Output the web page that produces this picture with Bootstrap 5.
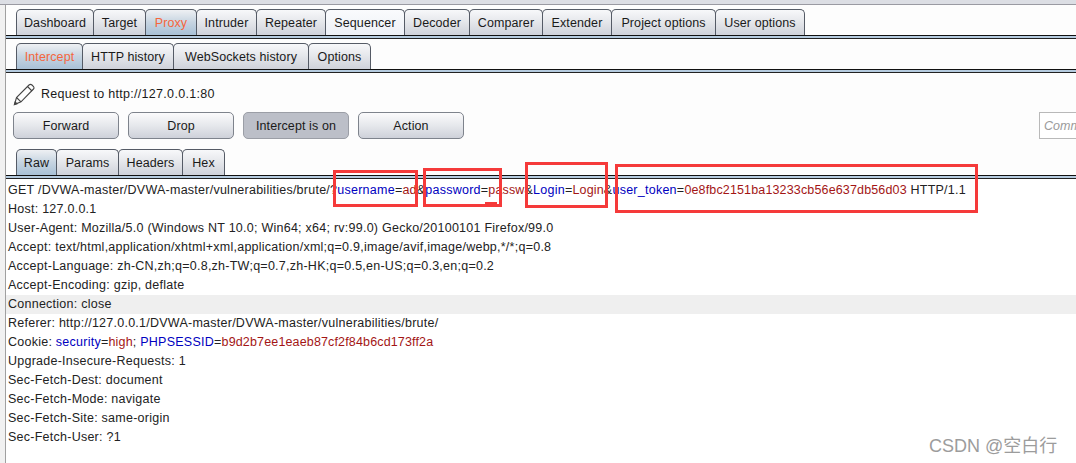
<!DOCTYPE html>
<html lang="en">
<head>
<meta charset="utf-8">
<title>Burp Suite</title>
<link href="https://cdn.jsdelivr.net/npm/bootstrap@5.3.0/dist/css/bootstrap.min.css" rel="stylesheet">
<style>
html,body{height:463px;overflow:hidden}
body{background:#f1f1f1;font-family:"Liberation Sans",Arial,sans-serif;font-size:12px;color:#1a1a1a;position:relative}
.topstrip{height:5px;background:#dcdee4;border-bottom:1px solid #9a9aa2}
.shell{height:458px;margin-left:5px;border-left:1px solid #a0a0a0;background:#fdfdfd;overflow:hidden}
.tabrow{padding-left:10px;border-bottom:1px solid #111;flex-wrap:nowrap}
.tabrow .tabx{height:26px;padding-top:1px;display:flex;align-items:center;justify-content:center;border:1px solid #555b66;border-bottom:0;border-radius:5px 5px 0 0;margin-right:-1px;background:linear-gradient(#f7f8fa,#e6e8ec 45%,#cfd2da);color:#1a1a1a;font-size:12.5px;letter-spacing:.1px;text-decoration:none}
.tabrow .tabx.on{background:linear-gradient(#eef0f3,#c6d4e1 50%,#a9c1d6)}
.tabrow .tabx.on.hot{color:#f5663c}
.tabrow .tabx.pale{background:linear-gradient(#fafbfd,#edf0f6)}
.understrip{height:3px;background:#b5cbdf;border-bottom:1px solid #222}
.sec1{height:4px}
.sec2{height:4px}
.reqline{height:39px;padding:3px 0 0 7px;gap:6px;font-size:12.5px;letter-spacing:.3px}
.actions{padding-left:7px;gap:9px;height:27px}
.actbtn{width:106px;height:27px;padding:1px 0 0;border:1px solid #7e838c;border-radius:5px;background:linear-gradient(#fbfbfc,#e6e8ec 50%,#ced1d9);color:#1a1a1a;font-size:12.5px;letter-spacing:.1px;font-family:inherit}
.actbtn.pressed{background:#bcbfc8;border-color:#9b9ea6}
.commentbox{width:60px;height:27px;border:1px solid #b9b9b9;background:#fff;color:#9a9a9a;font-style:italic;font-size:12.5px;padding:4px 4px;white-space:nowrap;overflow:hidden;margin-left:auto;margin-right:-23px}
.gaprow{height:10px}
.msg{background:#fff;padding-top:2px;height:300px;font-size:12.5px;letter-spacing:.25px;line-height:19px;color:#222}
.ln{height:19px;padding-left:2px;white-space:nowrap}
.ln.hl{background:#efefef}
.kn{color:#0000c0}
.kv{color:#a31515;letter-spacing:.15px}
.redbox{position:absolute;border:3px solid #f53a3a;pointer-events:none}
.redfill{position:absolute;background:#f53a3a}
.wm{position:absolute;left:929px;top:433px;color:#9c9c9c;font-size:18px;font-family:"Liberation Sans","Noto Sans CJK SC",sans-serif}
</style>
</head>
<body>
<div class="topstrip"></div>
<div class="shell">
  <div class="sec2"></div>
  <nav class="d-flex tabrow">
    <a class="tabx" style="width:78px">Dashboard</a>
    <a class="tabx" style="width:53px">Target</a>
    <a class="tabx on hot" style="width:52px">Proxy</a>
    <a class="tabx" style="width:61px">Intruder</a>
    <a class="tabx" style="width:70px">Repeater</a>
    <a class="tabx pale" style="width:80px">Sequencer</a>
    <a class="tabx" style="width:66px">Decoder</a>
    <a class="tabx" style="width:74px">Comparer</a>
    <a class="tabx" style="width:70px">Extender</a>
    <a class="tabx" style="width:105px">Project options</a>
    <a class="tabx" style="width:90px">User options</a>
  </nav>
  <div class="understrip"></div>
  <div class="sec1"></div>
  <nav class="d-flex tabrow">
    <a class="tabx on hot" style="width:67px">Intercept</a>
    <a class="tabx" style="width:92px">HTTP history</a>
    <a class="tabx" style="width:136px">WebSockets history</a>
    <a class="tabx" style="width:63px">Options</a>
  </nav>
  <div class="understrip"></div>
  <div class="d-flex align-items-center reqline">
    <svg width="22" height="24" viewBox="0 0 22 24" fill="none" stroke="#444" stroke-width="1.1"><path d="M1.5 22.5 L3.5 15.5 L16 3 Q17.5 1.8 19 3 L20.5 4.5 Q21.5 6 20.5 7 L8 19.8 Z"/><path d="M3.5 15.5 L8 19.8"/><path d="M14.5 4.5 L19 9"/><path d="M1.5 22.5 L4 21.8 L2.2 20Z" fill="#444"/></svg>
    <span>Request to http://127.0.0.1:80</span>
  </div>
  <div class="d-flex actions">
    <button type="button" class="actbtn">Forward</button>
    <button type="button" class="actbtn">Drop</button>
    <button type="button" class="actbtn pressed">Intercept is on</button>
    <button type="button" class="actbtn">Action</button>
    <div class="commentbox">Comment</div>
  </div>
  <div class="gaprow"></div>
  <nav class="d-flex tabrow">
    <a class="tabx on" style="width:41px">Raw</a>
    <a class="tabx" style="width:63px">Params</a>
    <a class="tabx" style="width:65px">Headers</a>
    <a class="tabx" style="width:43px">Hex</a>
  </nav>
  <div class="understrip"></div>
  <div class="msg">
    <div class="ln">GET /DVWA-master/DVWA-master/vulnerabilities/brute/?<span class="kn">username</span>=<span class="kv">ad</span>&amp;<span class="kn">password</span>=<span class="kv">passw</span>&amp;<span class="kn">Login</span>=<span class="kv">Login</span>&amp;<span class="kn">user_token</span>=<span class="kv">0e8fbc2151ba13233cb56e637db56d03</span> HTTP/1.1</div>
    <div class="ln">Host: 127.0.0.1</div>
    <div class="ln">User-Agent: Mozilla/5.0 (Windows NT 10.0; Win64; x64; rv:99.0) Gecko/20100101 Firefox/99.0</div>
    <div class="ln">Accept: text/html,application/xhtml+xml,application/xml;q=0.9,image/avif,image/webp,*/*;q=0.8</div>
    <div class="ln">Accept-Language: zh-CN,zh;q=0.8,zh-TW;q=0.7,zh-HK;q=0.5,en-US;q=0.3,en;q=0.2</div>
    <div class="ln">Accept-Encoding: gzip, deflate</div>
    <div class="ln hl">Connection: close</div>
    <div class="ln">Referer: http://127.0.0.1/DVWA-master/DVWA-master/vulnerabilities/brute/</div>
    <div class="ln">Cookie: <span class="kn">security</span>=<span class="kv">high</span>; <span class="kn">PHPSESSID</span>=<span class="kv">b9d2b7ee1eaeb87cf2f84b6cd173ff2a</span></div>
    <div class="ln">Upgrade-Insecure-Requests: 1</div>
    <div class="ln">Sec-Fetch-Dest: document</div>
    <div class="ln">Sec-Fetch-Mode: navigate</div>
    <div class="ln">Sec-Fetch-Site: same-origin</div>
    <div class="ln">Sec-Fetch-User: ?1</div>
  </div>
</div>
<div class="redbox" style="left:333px;top:170px;width:85px;height:37px"></div>
<div class="redbox" style="left:423px;top:168px;width:79px;height:39px"></div>
<div class="redfill" style="left:485px;top:202px;width:12px;height:4px"></div>
<div class="redbox" style="left:525px;top:162px;width:83px;height:46px"></div>
<div class="redbox" style="left:615px;top:164px;width:363px;height:49px"></div>
<div class="wm">CSDN @空白行</div>
<script src="https://cdn.jsdelivr.net/npm/bootstrap@5.3.0/dist/js/bootstrap.bundle.min.js"></script>
</body>
</html>
